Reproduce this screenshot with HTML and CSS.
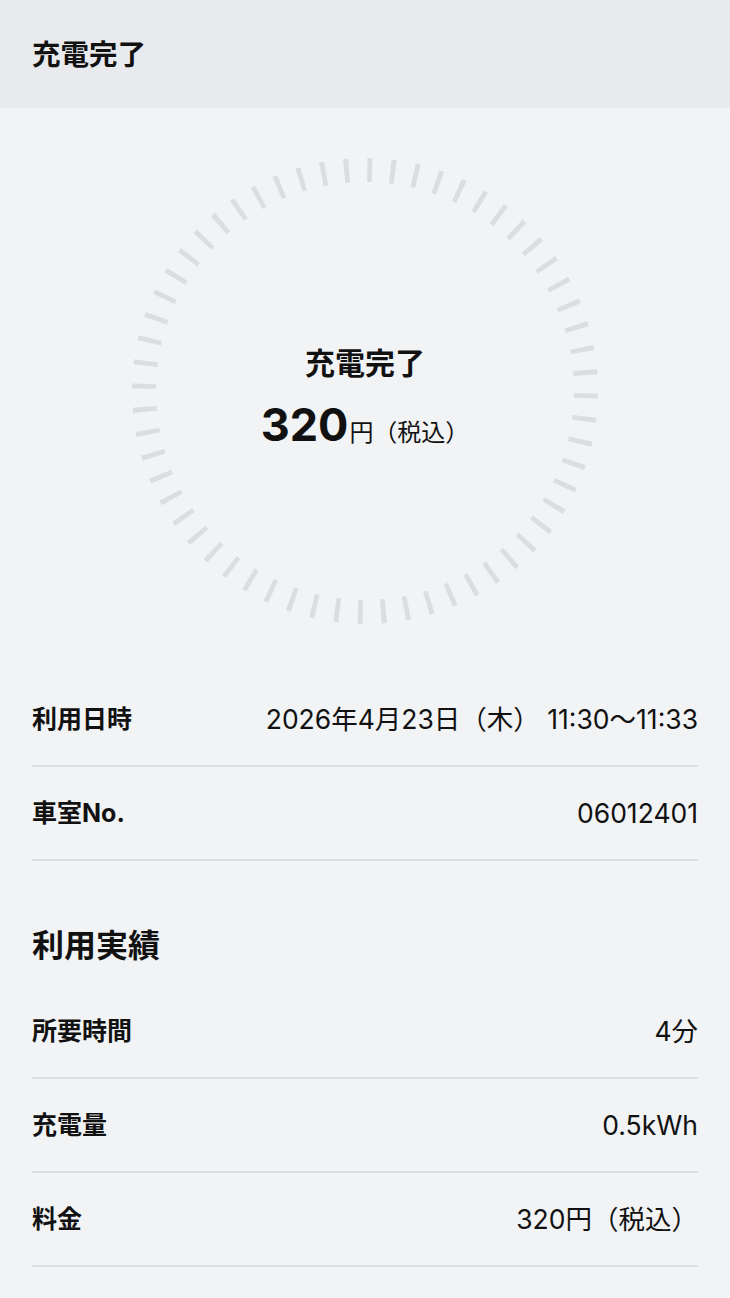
FILE: index.html
```html
<!DOCTYPE html>
<html lang="ja">
<head>
    <meta charset="UTF-8">
    <meta name="viewport" content="width=device-width, initial-scale=1.0">
    <title>充電完了</title>
    <link rel="stylesheet" href="styles.css">
</head>
<body>
    <header class="app-header">
        <h1 class="app-title">充電完了</h1>
    </header>

    <main>
        <section class="status">
            <div class="ring">
                <svg class="ring-ticks" viewBox="0 0 470 470" width="470" height="470" aria-hidden="true">
                    <circle cx="235" cy="235" r="221" pathLength="60" fill="none" stroke="#dcdde3" stroke-width="24" stroke-dasharray="0.21 0.79" stroke-dashoffset="-0.1"/>
                </svg>
                <div class="ring-text">
                    <p class="ring-title">充電完了</p>
                    <p class="ring-amount"><span class="amount-num">320</span><span class="amount-unit">円（税込）</span></p>
                </div>
            </div>
        </section>

        <dl class="info-list">
            <div class="info-row">
                <dt>利用日時</dt>
                <dd>2026年4月23日（木） 11:30〜11:33</dd>
            </div>
            <div class="info-row">
                <dt>車室No.</dt>
                <dd>06012401</dd>
            </div>
        </dl>

        <h2 class="section-title">利用実績</h2>

        <dl class="info-list">
            <div class="info-row">
                <dt>所要時間</dt>
                <dd>4分</dd>
            </div>
            <div class="info-row">
                <dt>充電量</dt>
                <dd>0.5kWh</dd>
            </div>
            <div class="info-row">
                <dt>料金</dt>
                <dd>320円（税込）</dd>
            </div>
        </dl>
    </main>
</body>
</html>
```

FILE: styles.css
```css
body { margin: 0; background-color: #f2f3f5; color: #111; font-family: Inter, "Noto Sans CJK JP", sans-serif; }
p, h1, h2, dl, dd { margin: 0; }

.app-header { height: 108px; background-color: #e9eaee; display: flex; align-items: center; padding: 0 32px; box-sizing: border-box; }
.app-title { font-size: 28.5px; font-weight: 700; line-height: 40px; padding-top: 2px; }

.status { display: flex; justify-content: center; padding: 48px 0 47px; }
.ring { display: grid; width: 470px; height: 470px; }
.ring-ticks, .ring-text { grid-area: 1 / 1; }
.ring-text { display: flex; flex-direction: column; align-items: center; justify-content: center; gap: 14px; padding-top: 24px; }
.ring-title { font-size: 30px; font-weight: 700; line-height: 40px; }
.ring-amount { line-height: 56px; }
.amount-num { font-size: 45px; font-weight: 700; }
.amount-unit { font-size: 24px; margin-left: 1px; }

.info-list { margin: 0 32px; }
.info-row { display: flex; justify-content: space-between; align-items: center; padding: 28px 0; line-height: 36px; border-bottom: 2px solid #dcdee3; }
.info-row dt { font-size: 25px; font-weight: 700; }
.info-row dd { font-size: 26.5px; }

.section-title { margin: 63px 32px 17px; font-size: 32px; font-weight: 700; line-height: 44px; }
```
